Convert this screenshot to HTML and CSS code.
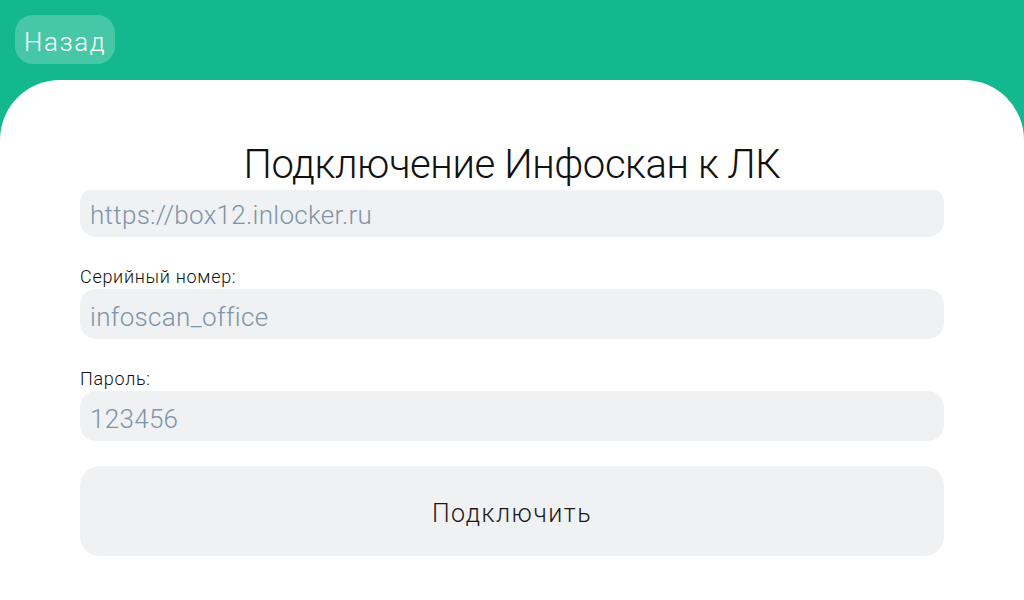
FILE: index.html
```html
<!DOCTYPE html>
<html lang="ru">
<head>
<meta charset="utf-8">
<title>Подключение Инфоскан к ЛК</title>
<link rel="stylesheet" href="styles.css">
</head>
<body>
<div class="app">
  <header class="header">
    <button class="back" type="button">Назад</button>
  </header>
  <main class="card">
    <h1 class="title">Подключение Инфоскан к ЛК</h1>
    <div class="form">
      <div class="scroll">
        <div class="scroll-inner">
          <div class="field">
            <input class="input" type="text" value="https://box12.inlocker.ru" aria-label="Адрес сервера">
          </div>
          <div class="field">
            <label class="label">Серийный номер:</label>
            <input class="input" type="text" value="infoscan_office">
          </div>
          <div class="field">
            <label class="label">Пароль:</label>
            <input class="input" type="text" value="123456">
          </div>
        </div>
      </div>
      <button class="connect" type="button">Подключить</button>
    </div>
  </main>
</div>
</body>
</html>
```
FILE: styles.css
```css
html, body {
  margin: 0;
  padding: 0;
}
body {
  width: 1024px;
  height: 600px;
  overflow: hidden;
  background: #13b88e;
  font-family: "Roboto", "Noto Sans", sans-serif;
  font-weight: 300;
}
.app {
  display: flex;
  flex-direction: column;
  height: 600px;
}
.header {
  height: 80px;
  box-sizing: border-box;
  padding: 15px;
  display: flex;
  align-items: flex-start;
}
.back {
  height: 49px;
  padding: 0 9px;
  border: none;
  border-radius: 18px;
  background: rgba(255, 255, 255, 0.22);
  color: #ffffff;
  font-family: inherit;
  font-weight: 300;
  font-size: 26px;
  letter-spacing: 1.6px;
  padding-top: 4px;
  cursor: pointer;
}
.card {
  flex: 1;
  background: #ffffff;
  border-radius: 60px 60px 0 0;
  padding-top: 60px;
  display: flex;
  flex-direction: column;
}
.title {
  margin: 0;
  font-weight: 300;
  font-size: 40px;
  line-height: 50px;
  text-align: center;
  color: #111111;
  letter-spacing: -0.4px;
}
.form {
  padding: 0 80px;
  display: flex;
  flex-direction: column;
}
.scroll {
  height: 252px;
  overflow: hidden;
}
.scroll-inner {
  margin-top: -3px;
}
.field {
  display: flex;
  flex-direction: column;
  margin-bottom: 30px;
}
.label {
  font-size: 18px;
  line-height: 20px;
  margin-bottom: 2px;
  padding-top: 2px;
  margin-top: -2px;
  letter-spacing: 0.7px;
  color: #111111;
}
.input {
  height: 50px;
  box-sizing: border-box;
  border: none;
  outline: none;
  border-radius: 16px;
  background: #f0f1f3;
  padding: 5px 10px 0;
  font-family: inherit;
  font-weight: 300;
  font-size: 26px;
  letter-spacing: 0.3px;
  color: #7c95ab;
}
.connect {
  margin-top: 24px;
  height: 90px;
  border: none;
  border-radius: 20px;
  background: #f0f1f3;
  font-family: inherit;
  font-weight: 300;
  font-size: 25px;
  letter-spacing: 1.5px;
  padding-top: 6px;
  color: #1a1a1a;
  cursor: pointer;
}
```
